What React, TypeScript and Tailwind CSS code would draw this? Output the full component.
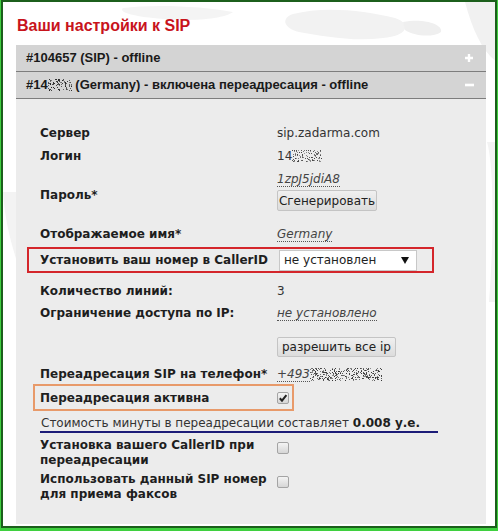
import React from "react";

function Noise({ w, h, seed, color = "#444" }: { w: number; h: number; seed: number; color?: string }) {
  let s = seed;
  const rnd = () => {
    s = (s * 9301 + 49297) % 233280;
    return s / 233280;
  };
  const dots: React.ReactElement[] = [];
  const n = Math.round((w * h) / 3);
  for (let i = 0; i < n; i++) {
    const x = Math.floor(rnd() * w);
    const y = Math.floor(rnd() * h);
    dots.push(<rect key={i} x={x} y={y} width={1} height={1} fill={color} opacity={0.5 + rnd() * 0.5} />);
  }
  return (
    <svg width={w} height={h} className="inline-block align-middle">
      {dots}
    </svg>
  );
}

function Checkbox({ checked = false }: { checked?: boolean }) {
  return (
    <span className="flex h-[12px] w-[12px] items-center justify-center rounded-[2px] border border-[#a4a4a4] bg-gradient-to-b from-[#f4f4f4] to-[#d6d6d6]">
      {checked && (
        <svg width="10" height="10" viewBox="0 0 10 10">
          <path d="M1.8 5.2 L4 7.6 L8.4 2.2" fill="none" stroke="#222" strokeWidth="2" />
        </svg>
      )}
    </span>
  );
}

function Row({ label, children, h = "h-[22px]" }: { label: string; children?: React.ReactNode; h?: string }) {
  return (
    <div className={`flex items-center pl-[13px] ${h}`}>
      <div className="w-[237px] font-bold text-[#1e1e1e]">{label}</div>
      <div className="text-[#333]">{children}</div>
    </div>
  );
}

function Dotted({ children }: { children: React.ReactNode }) {
  return <span className="italic text-[#444] border-b border-dotted border-[#555] leading-[14px]">{children}</span>;
}

export default function App() {
  return (
    <div className="h-[531px] w-[498px] bg-[#3fd03f] px-px pb-[3px]">
      <div
        className="relative h-full overflow-hidden border-2 border-[#1c5f1c] bg-white"
        style={{ fontFamily: '"DejaVu Sans", Verdana, sans-serif' }}
      >
        <svg className="absolute inset-0" width="494" height="526" viewBox="0 0 494 526">
          <path d="M290 12 C320 4 360 8 392 16 C410 22 404 34 380 36 C350 40 320 34 296 30 C280 26 278 16 290 12 Z" fill="#f2f2f2" />
          <path d="M120 6 C150 2 200 4 230 10 C220 18 180 20 150 16 C130 14 115 10 120 6 Z" fill="#f4f4f4" />
          <path d="M400 20 C420 16 440 22 438 30 C430 36 410 34 402 28 Z" fill="#efefef" />
          <path d="M462 0 L494 0 L494 60 C480 50 470 30 462 0 Z" fill="#f1f1f1" />
          <path d="M484 140 C490 160 492 220 486 300 L494 300 L494 140 Z" fill="#f3f3f3" />
          <path d="M0 190 L14 190 L14 260 C8 240 2 220 0 190 Z" fill="#f3f3f3" />
        </svg>

        <div className="relative px-[13px]">
          <div
            className="h-[43px] pl-px pt-[14px] text-[16px] font-bold leading-[20px] text-[#c8141c]"
            style={{ fontFamily: '"Liberation Sans", Arial, sans-serif' }}
          >
            Ваши настройки к SIP
          </div>

          <div className="w-[470px] bg-[#ececec] text-[12px] leading-[16px]">
            <div style={{ fontFamily: '"Liberation Sans", Arial, sans-serif' }} className="text-[13px] font-bold text-[#1a1a1a]">
              <div className="flex h-[27px] items-center justify-between border-b border-[#7d7d7d] bg-[#d4d4d4] pl-[10px] pr-[13px]">
                <span>#104657 (SIP) - offline</span>
                <svg width="8" height="8" viewBox="0 0 8 8">
                  <path d="M4 0 V8 M0 4 H8" stroke="#fff" strokeWidth="2.4" />
                </svg>
              </div>
              <div className="flex h-[27px] items-center justify-between border-b border-[#7d7d7d] bg-[#d4d4d4] pl-[10px] pr-[12px]">
                <span className="flex items-center">
                  #14
                  <Noise w={24} h={12} seed={7} color="#222" />
                  <span className="whitespace-pre"> (Germany) - включена переадресация - offline</span>
                </span>
                <svg width="9" height="4" viewBox="0 0 9 4">
                  <path d="M0 2 H9" stroke="#fff" strokeWidth="2.6" />
                </svg>
              </div>
            </div>

            <div className="pb-[22px] pl-[11px] pt-[22px]">
              <Row label="Сервер" h="h-[23px]">sip.zadarma.com</Row>
              <Row label="Логин" h="h-[23px]">
                <span className="flex items-center">
                  14
                  <Noise w={30} h={12} seed={3} color="#444" />
                </span>
              </Row>

              <div className="flex items-start pl-[13px]">
                <div className="mt-[20px] w-[237px] font-bold text-[#1e1e1e]">Пароль*</div>
                <div className="flex flex-col items-start pt-[5px]">
                  <Dotted>1zpJ5jdiA8</Dotted>
                  <button className="mt-[3px] h-[21px] w-[100px] whitespace-nowrap rounded-[2px] border border-[#c4c4c4] bg-gradient-to-b from-[#f0f0f0] to-[#dcdcdc] text-[12px] text-[#222]">
                    Сгенерировать
                  </button>
                </div>
              </div>

              <div className="mt-[12px]">
                <Row label="Отображаемое имя*">
                  <Dotted>Germany</Dotted>
                </Row>
              </div>

              <div className="mt-[2px] flex h-[26px] w-[407px] items-center border-2 border-[#d4262b] pl-[11px]">
                <div className="w-[239px] font-bold text-[#1e1e1e]">Установить ваш номер в CallerID</div>
                <div className="flex h-[21px] w-[138px] items-center justify-between border border-[#c8c8c8] bg-white pl-[4px] pr-[7px] text-[#222]">
                  <span>не установлен</span>
                  <svg width="8" height="7" viewBox="0 0 8 7">
                    <path d="M0 0 H8 L4 7 Z" fill="#111" />
                  </svg>
                </div>
              </div>

              <div className="mt-[7px]">
                <Row label="Количество линий:">3</Row>
                <Row label="Ограничение доступа по IP:">
                  <Dotted>не установлено</Dotted>
                </Row>
              </div>

              <div className="mt-[13px] pl-[250px]">
                <button className="h-[20px] whitespace-nowrap rounded-[2px] border border-[#c4c4c4] bg-gradient-to-b from-[#f0f0f0] to-[#dcdcdc] px-[4px] text-[12px] text-[#222]">
                  разрешить все ip
                </button>
              </div>

              <div className="mt-[7px]">
                <Row label="Переадресация SIP на телефон*" h="h-[20px]">
                  <span className="flex items-center">
                    <Dotted>+493</Dotted>
                    <Noise w={72} h={13} seed={11} color="#333" />
                  </span>
                </Row>
              </div>

              <div className="ml-[6px] flex h-[27px] w-[261px] items-center border-2 border-[#e89a6a] pl-[5px]">
                <div className="w-[237px] font-bold text-[#1e1e1e]">Переадресация активна</div>
                <Checkbox checked />
              </div>

              <div className="ml-[13px] w-[398px] border-b-2 border-[#1c1c78] pl-px pt-[4px] text-[#333]">
                Стоимость минуты в переадресации составляет <b className="text-[#1e1e1e]">0.008 у.е.</b>
              </div>

              <div className="mt-[5px] flex items-start pl-[13px] leading-[15px]">
                <div className="w-[237px] font-bold text-[#1e1e1e]">
                  Установка вашего CallerID при
                  <br />
                  переадресации
                </div>
                <div className="mt-[4px]">
                  <Checkbox />
                </div>
              </div>

              <div className="mt-[4px] flex items-start pl-[13px] leading-[15px]">
                <div className="w-[237px] font-bold text-[#1e1e1e]">
                  Использовать данный SIP номер
                  <br />
                  для приема факсов
                </div>
                <div className="mt-[4px]">
                  <Checkbox />
                </div>
              </div>
            </div>
          </div>
        </div>
      </div>
    </div>
  );
}
